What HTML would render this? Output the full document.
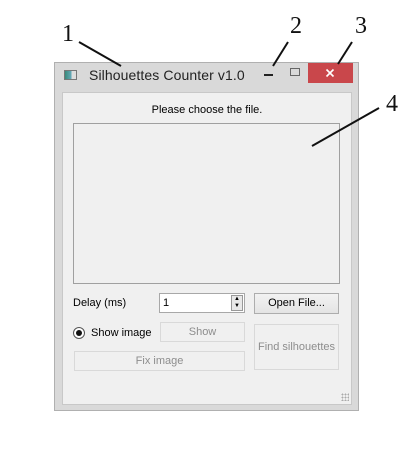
<!DOCTYPE html>
<html><head><style>
body{margin:0;width:414px;height:474px;background:#fff;position:relative;overflow:hidden;font-family:"Liberation Sans",sans-serif;}
.a{position:absolute}
.num{position:absolute;font-family:"Liberation Serif",serif;font-size:24px;color:#111;line-height:1}
.ui{font-size:11px;color:#000}
.btn{position:absolute;border:1px solid #adadad;background:linear-gradient(#f2f2f2,#e4e4e4);font-size:11px;text-align:center;box-sizing:border-box}
.dis{border-color:#d9d9d9;background:#f0f0f0;color:#8d8d8d}
</style></head><body>
<div class="a" style="left:54px;top:62px;width:305px;height:349px;background:#d9d9d9;border:1px solid #b0b0b0;box-sizing:border-box"></div>
<div class="a" style="left:62px;top:92px;width:290px;height:313px;background:#f0f0f0;border:1px solid #c8c8c8;box-sizing:border-box"></div>
<div class="a" style="left:64px;top:70px;width:13px;height:10px;border:1px solid #777;background:linear-gradient(90deg,#3a8a7a,#6ab 60%,#ddd 60%);box-sizing:border-box"></div>
<div class="a" style="left:89px;top:67px;font-size:14px;color:#222;letter-spacing:0.1px">Silhouettes Counter v1.0</div>
<div class="a" style="left:264px;top:74px;width:9px;height:2px;background:#222"></div>
<div class="a" style="left:290px;top:68px;width:10px;height:8px;border:1px solid #666;box-sizing:border-box"></div>
<div class="a" style="left:308px;top:63px;width:45px;height:20px;background:#c9474b"></div>
<svg class="a" style="left:325px;top:68px" width="10" height="10"><path d="M1.5 1.5L8.5 8.5M8.5 1.5L1.5 8.5" stroke="#fff" stroke-width="1.6"/></svg>
<div class="a ui" style="left:62px;width:290px;top:104px;text-align:center">Please choose the file.</div>
<div class="a" style="left:73px;top:123px;width:267px;height:161px;border:1px solid #a0a0a0;background:#f0f0f0;box-sizing:border-box"></div>
<div class="a ui" style="left:73px;top:297px">Delay (ms)</div>
<div class="a" style="left:159px;top:293px;width:86px;height:20px;border:1px solid #a8a8a8;background:#fff;box-sizing:border-box"></div>
<div class="a ui" style="left:163px;top:297px">1</div>
<div class="a" style="left:231px;top:295px;width:12px;height:16px;border:1px solid #999;background:#e8e8e8;box-sizing:border-box;font-size:6px;line-height:7px;text-align:center">▲<br>▼</div>
<div class="btn" style="left:254px;top:293px;width:85px;height:21px;line-height:19px">Open File...</div>
<div class="a" style="left:73px;top:327px;width:12px;height:12px;border:1px solid #555;border-radius:50%;background:#fff;box-sizing:border-box"></div>
<div class="a" style="left:76px;top:330px;width:6px;height:6px;border-radius:50%;background:#111"></div>
<div class="a ui" style="left:91px;top:327px">Show image</div>
<div class="btn dis" style="left:160px;top:322px;width:85px;height:20px;line-height:18px">Show</div>
<div class="btn dis" style="left:254px;top:324px;width:85px;height:46px;line-height:44px">Find silhouettes</div>
<div class="btn dis" style="left:74px;top:351px;width:171px;height:20px;line-height:18px">Fix image</div>
<div class="a" style="left:341px;top:393px;width:8px;height:8px;background:radial-gradient(circle,#aaa 1px,transparent 1px) 0 0/3px 3px"></div>
<div class="num" style="left:62px;top:22px">1</div>
<div class="num" style="left:290px;top:14px">2</div>
<div class="num" style="left:355px;top:14px">3</div>
<div class="num" style="left:386px;top:92px">4</div>
<svg class="a" style="left:0;top:0" width="414" height="474"><g stroke="#111" stroke-width="2">
<line x1="79" y1="42" x2="121" y2="66"/><line x1="288" y1="42" x2="273" y2="66"/><line x1="352" y1="42" x2="338" y2="64"/><line x1="379" y1="108" x2="312" y2="146"/></g></svg>
</body></html>
